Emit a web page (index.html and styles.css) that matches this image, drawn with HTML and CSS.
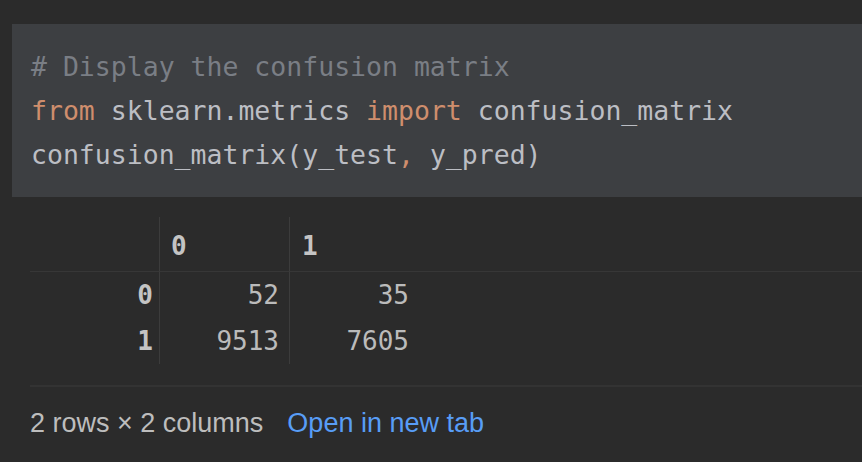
FILE: index.html
```html
<!DOCTYPE html>
<html>
<head>
<meta charset="utf-8">
<link rel="stylesheet" href="styles.css">
</head>
<body>
<div class="cell">
  <pre class="code"><span class="cm"># Display the confusion matrix</span>
<span class="kw">from</span> sklearn.metrics <span class="kw">import</span> confusion_matrix
confusion_matrix(y_test<span class="kw">,</span> y_pred)</pre>
</div>
<div class="output">
  <div class="df">
    <div class="c idx head"></div>
    <div class="c col head">0</div>
    <div class="c col head last">1</div>
    <div class="c fill head"></div>

    <div class="c idx">0</div>
    <div class="c val">52</div>
    <div class="c val last">35</div>
    <div class="c fill"></div>

    <div class="c idx">1</div>
    <div class="c val">9513</div>
    <div class="c val last">7605</div>
    <div class="c fill"></div>
  </div>
  <div class="footer">
    <span class="dims">2 rows × 2 columns</span>
    <span class="link">Open in new tab</span>
  </div>
</div>
</body>
</html>
```
FILE: styles.css
```css
html, body {
  margin: 0;
  padding: 0;
  background: #2b2b2b;
}
body {
  box-sizing: border-box;
  padding-top: 24px;
  width: 862px;
  height: 462px;
  overflow: hidden;
}
.cell {
  margin-left: 12px;
  background: #3d3f42;
  padding: 21px 0 20px 19px;
}
.code {
  margin: 0;
  font-family: "DejaVu Sans Mono", "Liberation Mono", monospace;
  font-size: 26.5px;
  line-height: 44px;
  color: #bcbec4;
  white-space: pre;
}
.cm { color: #7a7e85; }
.kw { color: #cf8e6d; }

.output {
  padding-left: 30px;
  padding-top: 20px;
}
.df {
  display: grid;
  grid-template-columns: 130px 130px 130px 1fr;
  font-family: "DejaVu Sans Mono", "Liberation Mono", monospace;
  font-size: 26px;
  line-height: 30px;
  color: #bbbbbb;
}
.c {
  height: 46px;
  padding: 8px 0;
  box-sizing: border-box;
}
.head {
  height: 55px;
  padding: 14px 0 10px;
  border-bottom: 1px solid #373737;
}
.idx {
  text-align: right;
  padding-right: 6px;
  border-right: 1px solid #3c3c3c;
  font-weight: bold;
  color: #c4c4c4;
}
.col {
  padding-left: 11px;
  border-right: 1px solid #3c3c3c;
  font-weight: bold;
  color: #c4c4c4;
}
.col.last { border-right: none; padding-left: 12px; }
.val {
  text-align: right;
  padding-right: 10px;
  border-right: 1px solid #3c3c3c;
}
.val.last { border-right: none; padding-right: 11px; }

.footer {
  margin-top: 21px;
  border-top: 2px solid #333333;
  padding-top: 21px;
  font-family: "Liberation Sans", Arial, sans-serif;
  font-size: 27px;
  line-height: 30px;
  display: flex;
  gap: 24px;
}
.dims { color: #bdbdbd; }
.link { color: #589df6; }
```
